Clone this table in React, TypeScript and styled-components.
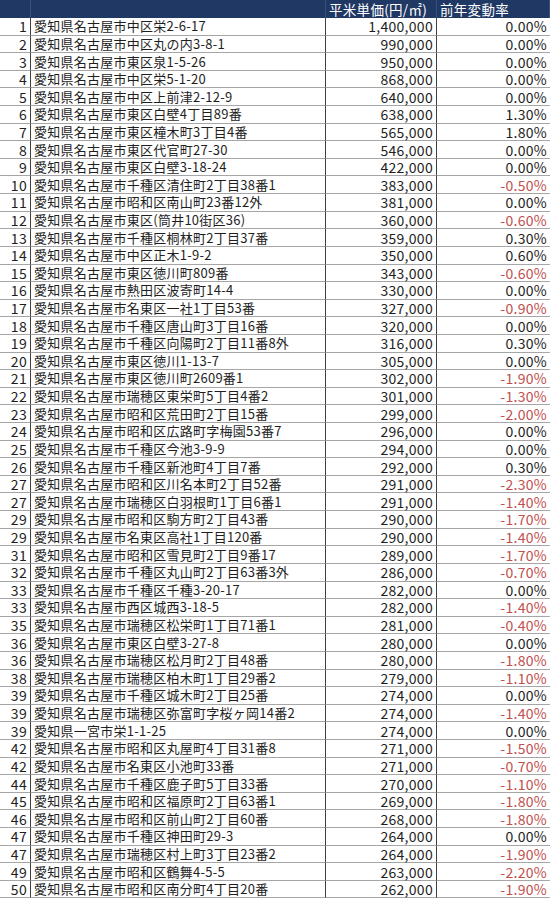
import React from "react";
import styled, { createGlobalStyle } from "styled-components";

const GlobalStyle = createGlobalStyle`
  html, body {
    margin: 0;
    padding: 0;
    background: #ffffff;
  }
  body {
    font-family: "Noto Sans CJK JP", "Noto Sans", sans-serif;
  }
`;

type Row = [string, string, string, string];

const rows: Row[] = [
  ["1", "愛知県名古屋市中区栄2-6-17", "1,400,000", "0.00%"],
  ["2", "愛知県名古屋市中区丸の内3-8-1", "990,000", "0.00%"],
  ["3", "愛知県名古屋市東区泉1-5-26", "950,000", "0.00%"],
  ["4", "愛知県名古屋市中区栄5-1-20", "868,000", "0.00%"],
  ["5", "愛知県名古屋市中区上前津2-12-9", "640,000", "0.00%"],
  ["6", "愛知県名古屋市東区白壁4丁目89番", "638,000", "1.30%"],
  ["7", "愛知県名古屋市東区橦木町3丁目4番", "565,000", "1.80%"],
  ["8", "愛知県名古屋市東区代官町27-30", "546,000", "0.00%"],
  ["9", "愛知県名古屋市東区白壁3-18-24", "422,000", "0.00%"],
  ["10", "愛知県名古屋市千種区清住町2丁目38番1", "383,000", "-0.50%"],
  ["11", "愛知県名古屋市昭和区南山町23番12外", "381,000", "0.00%"],
  ["12", "愛知県名古屋市東区(筒井10街区36)", "360,000", "-0.60%"],
  ["13", "愛知県名古屋市千種区桐林町2丁目37番", "359,000", "0.30%"],
  ["14", "愛知県名古屋市中区正木1-9-2", "350,000", "0.60%"],
  ["15", "愛知県名古屋市東区徳川町809番", "343,000", "-0.60%"],
  ["16", "愛知県名古屋市熱田区波寄町14-4", "330,000", "0.00%"],
  ["17", "愛知県名古屋市名東区一社1丁目53番", "327,000", "-0.90%"],
  ["18", "愛知県名古屋市千種区唐山町3丁目16番", "320,000", "0.00%"],
  ["19", "愛知県名古屋市千種区向陽町2丁目11番8外", "316,000", "0.30%"],
  ["20", "愛知県名古屋市東区徳川1-13-7", "305,000", "0.00%"],
  ["21", "愛知県名古屋市東区徳川町2609番1", "302,000", "-1.90%"],
  ["22", "愛知県名古屋市瑞穂区東栄町5丁目4番2", "301,000", "-1.30%"],
  ["23", "愛知県名古屋市昭和区荒田町2丁目15番", "299,000", "-2.00%"],
  ["24", "愛知県名古屋市昭和区広路町字梅園53番7", "296,000", "0.00%"],
  ["25", "愛知県名古屋市千種区今池3-9-9", "294,000", "0.00%"],
  ["26", "愛知県名古屋市千種区新池町4丁目7番", "292,000", "0.30%"],
  ["27", "愛知県名古屋市昭和区川名本町2丁目52番", "291,000", "-2.30%"],
  ["27", "愛知県名古屋市瑞穂区白羽根町1丁目6番1", "291,000", "-1.40%"],
  ["29", "愛知県名古屋市昭和区駒方町2丁目43番", "290,000", "-1.70%"],
  ["29", "愛知県名古屋市名東区高社1丁目120番", "290,000", "-1.40%"],
  ["31", "愛知県名古屋市昭和区雪見町2丁目9番17", "289,000", "-1.70%"],
  ["32", "愛知県名古屋市千種区丸山町2丁目63番3外", "286,000", "-0.70%"],
  ["33", "愛知県名古屋市千種区千種3-20-17", "282,000", "0.00%"],
  ["33", "愛知県名古屋市西区城西3-18-5", "282,000", "-1.40%"],
  ["35", "愛知県名古屋市瑞穂区松栄町1丁目71番1", "281,000", "-0.40%"],
  ["36", "愛知県名古屋市東区白壁3-27-8", "280,000", "0.00%"],
  ["36", "愛知県名古屋市瑞穂区松月町2丁目48番", "280,000", "-1.80%"],
  ["38", "愛知県名古屋市瑞穂区柏木町1丁目29番2", "279,000", "-1.10%"],
  ["39", "愛知県名古屋市千種区城木町2丁目25番", "274,000", "0.00%"],
  ["39", "愛知県名古屋市瑞穂区弥富町字桜ヶ岡14番2", "274,000", "-1.40%"],
  ["39", "愛知県一宮市栄1-1-25", "274,000", "0.00%"],
  ["42", "愛知県名古屋市昭和区丸屋町4丁目31番8", "271,000", "-1.50%"],
  ["42", "愛知県名古屋市名東区小池町33番", "271,000", "-0.70%"],
  ["44", "愛知県名古屋市千種区鹿子町5丁目33番", "270,000", "-1.10%"],
  ["45", "愛知県名古屋市昭和区福原町2丁目63番1", "269,000", "-1.80%"],
  ["46", "愛知県名古屋市昭和区前山町2丁目60番", "268,000", "-1.80%"],
  ["47", "愛知県名古屋市千種区神田町29-3", "264,000", "0.00%"],
  ["47", "愛知県名古屋市瑞穂区村上町3丁目23番2", "264,000", "-1.90%"],
  ["49", "愛知県名古屋市昭和区鶴舞4-5-5", "263,000", "-2.20%"],
  ["50", "愛知県名古屋市昭和区南分町4丁目20番", "262,000", "-1.90%"],
];

const Sheet = styled.div`
  display: grid;
  grid-template-columns: 31px 295px 111px 113px;
  grid-template-rows: 18px;
  grid-auto-rows: 17.62px;
  width: 550px;
  height: 899px;
  overflow: hidden;
  color: #1e1e1e;
`;

const HeadCell = styled.div`
  background: #1f3864;
  color: #ffffff;
  font-size: 13.5px;
  line-height: 18px;
  padding-left: 3px;
  white-space: nowrap;
  letter-spacing: 0.3px;
  border-right: 1px solid #3c4f78;
  &:last-child {
    border-right: none;
  }
`;

type Kind = "rank" | "addr" | "num" | "rate";

const Cell = styled.div<{ $kind: Kind; $neg?: boolean }>`
  display: flex;
  align-items: center;
  justify-content: ${(p) => (p.$kind === "addr" ? "flex-start" : "flex-end")};
  padding: ${(p) => (p.$kind === "addr" ? "0 0 0 3px" : "0 3px 0 0")};
  white-space: nowrap;
  border-bottom: 1px solid #a6a6a6;
  border-right: ${(p) => (p.$kind === "rate" ? "none" : "1px solid #404040")};
  color: ${(p) => (p.$neg ? "#c0504d" : "#1e1e1e")};
  font-size: ${(p) => (p.$kind === "addr" ? "13px" : "14px")};
  letter-spacing: ${(p) => (p.$kind === "addr" ? "0.25px" : "0.3px")};
  line-height: 16px;
`;

export default function App() {
  return (
    <>
      <GlobalStyle />
      <Sheet>
        <HeadCell />
        <HeadCell />
        <HeadCell>平米単価(円/㎡)</HeadCell>
        <HeadCell>前年変動率</HeadCell>
        {rows.map(([rank, addr, price, rate], i) => (
          <React.Fragment key={i}>
            <Cell $kind="rank">{rank}</Cell>
            <Cell $kind="addr">{addr}</Cell>
            <Cell $kind="num">{price}</Cell>
            <Cell $kind="rate" $neg={rate.startsWith("-")}>
              {rate}
            </Cell>
          </React.Fragment>
        ))}
      </Sheet>
    </>
  );
}
